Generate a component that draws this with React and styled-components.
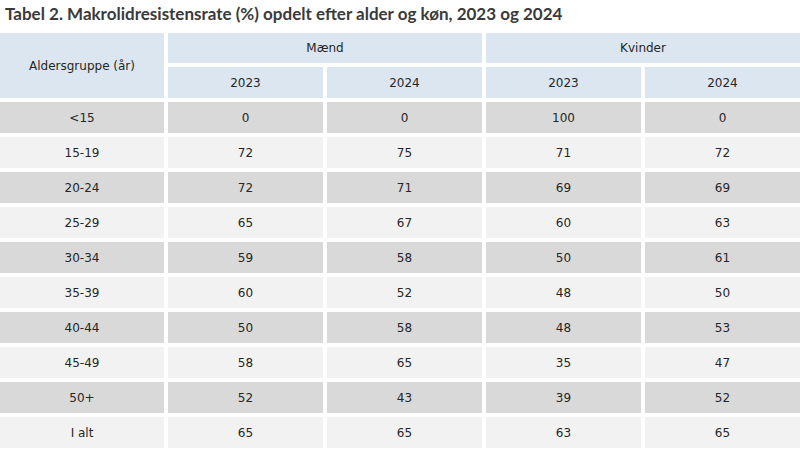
import React from 'react';
import styled, { createGlobalStyle } from 'styled-components';

const rows = [
    ['<15', 0, 0, 100, 0],
    ['15-19', 72, 75, 71, 72],
    ['20-24', 72, 71, 69, 69],
    ['25-29', 65, 67, 60, 63],
    ['30-34', 59, 58, 50, 61],
    ['35-39', 60, 52, 48, 50],
    ['40-44', 50, 58, 48, 53],
    ['45-49', 58, 65, 35, 47],
    ['50+', 52, 43, 39, 52],
    ['I alt', 65, 65, 63, 65],
];

const GlobalStyle = createGlobalStyle`
    html, body {
        margin: 0;
        padding: 0;
        background: #fff;
    }
    body {
        font-family: "DejaVu Sans", "Liberation Sans", sans-serif;
        color: #262626;
    }
`;

const App = () => {
    return (
        <Root>
            <GlobalStyle />
            <Title>Tabel 2. Makrolidresistensrate (%) opdelt efter alder og køn, 2023 og 2024</Title>
            <Grid>
                <HeadCell span={2}>Aldersgruppe (år)</HeadCell>
                <HeadCell cols={2}>Mænd</HeadCell>
                <HeadCell cols={2}>Kvinder</HeadCell>
                <HeadCell>2023</HeadCell>
                <HeadCell>2024</HeadCell>
                <HeadCell>2023</HeadCell>
                <HeadCell>2024</HeadCell>
                {rows.map((r, i) =>
                    r.map((v, j) => (
                        <Cell key={i + '-' + j} dark={i % 2 === 0}>{v}</Cell>
                    ))
                )}
            </Grid>
        </Root>
    );
};

const Root = styled.div`
    width: 800px;
    height: 449px;
    overflow: hidden;
`;

const Title = styled.h1`
    margin: 0;
    height: 33px;
    padding-left: 5px;
    box-sizing: border-box;
    font-family: Lato, "Liberation Sans", sans-serif;
    font-size: 17px;
    font-weight: bold;
    line-height: 27px;
    color: #3a3a3a;
    white-space: nowrap;
`;

const Grid = styled.div`
    display: grid;
    grid-template-columns: 164px repeat(4, 155px);
    grid-template-rows: 30px 31px repeat(10, 31px);
    gap: 4px;
`;

const Cell = styled.div`
    display: flex;
    align-items: center;
    justify-content: center;
    font-size: 12px;
    color: #262626;
    background: ${p => (p.dark ? '#d9d9d9' : '#f2f2f2')};
`;

const HeadCell = styled(Cell)`
    background: #dce6f1;
    grid-row: ${p => (p.span ? `span ${p.span}` : 'auto')};
    grid-column: ${p => (p.cols ? `span ${p.cols}` : 'auto')};
`;

export default App;
